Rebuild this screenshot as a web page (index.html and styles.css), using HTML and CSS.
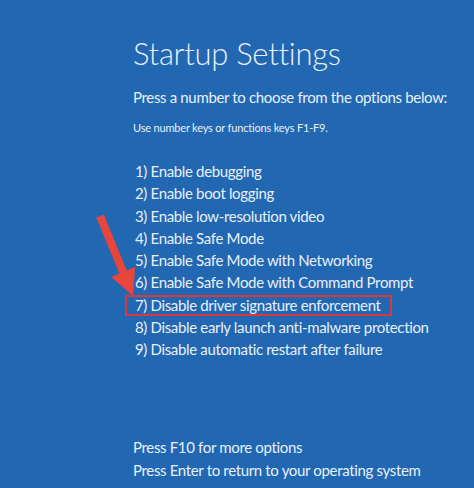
FILE: index.html
```html
<!DOCTYPE html>
<html lang="en">
<head>
    <meta charset="UTF-8">
    <meta name="viewport" content="width=device-width, initial-scale=1.0">
    <title>Startup Settings</title>
    <link rel="stylesheet" href="styles.css">
</head>
<body>
    <div class="screen">
        <h1 class="title">Startup Settings</h1>
        <p class="lead">Press a number to choose from the options below:</p>
        <p class="hint">Use number keys or functions keys F1-F9.</p>
        <ol class="options">
            <li>1) Enable debugging</li>
            <li>2) Enable boot logging</li>
            <li>3) Enable low-resolution video</li>
            <li>4) Enable Safe Mode</li>
            <li>5) Enable Safe Mode with Networking</li>
            <li>6) Enable Safe Mode with Command Prompt</li>
            <li><span class="marked">7) Disable driver signature enforcement</span></li>
            <li>8) Disable early launch anti-malware protection</li>
            <li>9) Disable automatic restart after failure</li>
        </ol>
        <div class="footer">
            <p>Press F10 for more options</p>
            <p>Press Enter to return to your operating system</p>
        </div>
        <!-- flecha roja sobre la captura -->
        <svg class="arrow" width="474" height="488" viewBox="0 0 474 488">
            <polygon fill="#e8453c" points="96.3,217.5 103.7,214.5 126.8,270.5 135.1,267 133,296 111.1,277 119.4,273.5"/>
        </svg>
    </div>
</body>
</html>
```

FILE: styles.css
```css
html, body {
    margin: 0;
    background: #2167b2;
}
.screen {
    position: relative;
    width: 474px;
    height: 488px;
    overflow: hidden;
    padding-left: 133px;
    box-sizing: border-box;
    font-family: Lato, "Open Sans", sans-serif;
    letter-spacing: -0.34px;
    color: #e9f0f9;
}
.title {
    margin: 35px 0 0;
    font-size: 31px;
    line-height: 36px;
    font-weight: 300;
    letter-spacing: -0.3px;
}
.lead {
    margin: 16px 0 0;
    font-size: 15px;
    line-height: 20px;
    white-space: nowrap;
}
.hint {
    margin: 13px 0 0;
    font-size: 11px;
    line-height: 16px;
    letter-spacing: -0.18px;
}
.options {
    list-style: none;
    margin: 24px 0 0;
    padding: 0 0 0 2px;
    font-size: 15px;
    line-height: 22.25px;
    white-space: nowrap;
}
.marked {
    display: inline-block;
    margin-left: -10px;
    padding: 0 9px 0 8px;
    border: 2px solid #d8393f;
    line-height: 17px;
}
.footer {
    margin-top: 76px;
    font-size: 15px;
    line-height: 23px;
    white-space: nowrap;
}
.footer p {
    margin: 0;
}
.arrow {
    position: absolute;
    left: 0;
    top: 0;
}
```
